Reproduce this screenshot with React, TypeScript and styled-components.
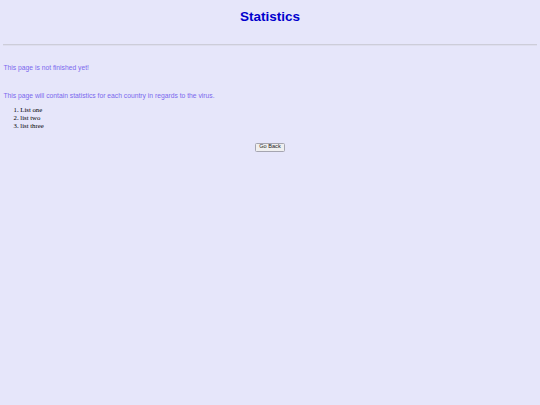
import styled, { createGlobalStyle } from "styled-components";

const GlobalStyle = createGlobalStyle`
  html,
  body {
    margin: 0;
    padding: 0;
    background-color: #e6e6fa;
  }
`;

const Page = styled.div`
  padding: 8.75px 3.4px 0;
  font-family: "Liberation Sans", Arial, sans-serif;
`;

const Title = styled.h1`
  margin: 0;
  text-align: center;
  font-size: 13.5px;
  line-height: 15.5px;
  font-weight: bold;
  color: #0000cd;
`;

const Divider = styled.hr`
  margin: 20px 0 0;
  border: none;
  border-top: 1px solid #cdcdd9;
  border-bottom: 1px solid #dedeee;
  height: 0;
`;

const Text = styled.p<{ $gap: number }>`
  margin: ${(p) => p.$gap}px 0 0;
  font-size: 6.75px;
  line-height: 7.8px;
  color: #7b68ee;
`;

const List = styled.ol`
  margin: 5.6px 0 0;
  padding-left: 16.9px;
  font-family: "Liberation Serif", "Times New Roman", serif;
  font-size: 6.75px;
  line-height: 7.9px;
  color: #000;
`;

const Actions = styled.div`
  display: flex;
  justify-content: center;
  margin-top: 13.6px;
`;

const Button = styled.button`
  width: 30px;
  height: 8.5px;
  padding: 0;
  font-family: "Liberation Sans", Arial, sans-serif;
  font-size: 5.6px;
  line-height: 1;
  color: #222;
  background-color: #efefef;
  border: 0.5px solid #a5a5b0;
  border-radius: 1.5px;
  cursor: pointer;
`;

const items = ["List one", "list two", "list three"];

const App = () => {
  return (
    <>
      <GlobalStyle />
      <Page>
        <Title>Statistics</Title>
        <Divider />
        <Text $gap={17.6}>This page is not finished yet!</Text>
        <Text $gap={20.7}>
          This page will contain statistics for each country in regards to the
          virus.
        </Text>
        <List>
          {items.map((item) => (
            <li key={item}>{item}</li>
          ))}
        </List>
        <Actions>
          <Button onClick={() => window.history.back()}>Go Back</Button>
        </Actions>
      </Page>
    </>
  );
};

export default App;
